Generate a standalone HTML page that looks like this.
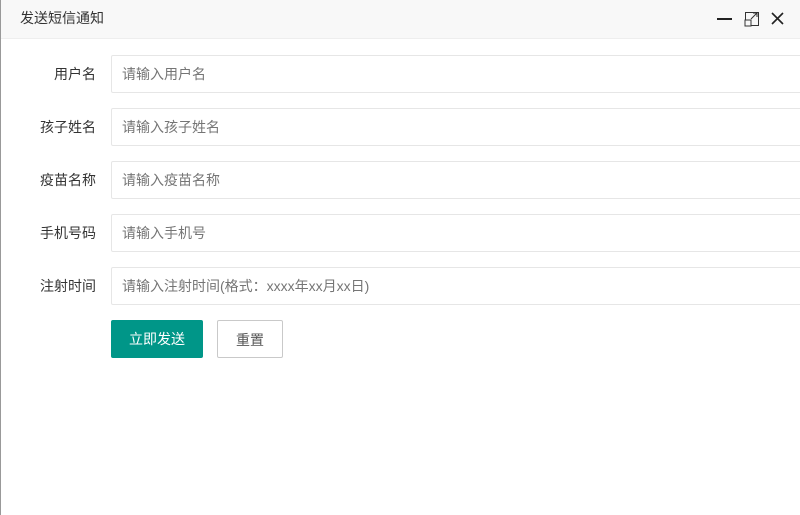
<!DOCTYPE html>
<html><head><meta charset="utf-8"><style>
body{margin:0;width:800px;height:515px;overflow:hidden;background:#fff;font-family:"Liberation Sans","Noto Sans CJK SC",sans-serif;position:relative}
.lb{position:absolute;left:0;top:0;width:1px;height:515px;background:#999}
.hd{position:absolute;left:1px;top:0;right:0;height:38px;background:#f8f8f8;border-bottom:1px solid #eee;color:#333;font-size:14px;line-height:36px;padding-left:19px}
.row{position:absolute;left:0;width:800px;height:38px}
.row label{position:absolute;right:704px;top:0;line-height:38px;font-size:14px;color:#333;white-space:nowrap}
.row .in{position:absolute;left:111px;top:0;width:700px;height:36px;border:1px solid #e6e6e6;border-radius:2px;line-height:36px;padding-left:10px;font-size:14px;color:#757575;box-sizing:content-box}
.btn{position:absolute;top:320px;height:38px;line-height:38px;font-size:14px;text-align:center;border-radius:2px;box-sizing:border-box}
</style></head><body>
<div class="lb"></div>
<div class="hd">发送短信通知
<svg style="position:absolute;left:716px;top:11px" width="70" height="16" viewBox="0 0 70 16">
<rect x="0" y="7" width="15" height="2" fill="#222"/>
<rect x="28.5" y="1.5" width="13" height="13" fill="none" stroke="#333" stroke-width="1"/>
<rect x="28" y="9" width="6" height="6" fill="#f8f8f8" stroke="#333" stroke-width="1"/>
<path d="M34 8 L40 2 M36 2 H40 V6" stroke="#333" fill="none"/>
<path d="M55 2 L66 13 M66 2 L55 13" stroke="#222" stroke-width="1.6"/>
</svg></div>
<div class="row" style="top:55px"><label>用户名</label><div class="in">请输入用户名</div></div>
<div class="row" style="top:108px"><label>孩子姓名</label><div class="in">请输入孩子姓名</div></div>
<div class="row" style="top:161px"><label>疫苗名称</label><div class="in">请输入疫苗名称</div></div>
<div class="row" style="top:214px"><label>手机号码</label><div class="in">请输入手机号</div></div>
<div class="row" style="top:267px"><label>注射时间</label><div class="in">请输入注射时间(格式：xxxx年xx月xx日)</div></div>
<div class="btn" style="left:111px;width:92px;background:#009688;color:#fff">立即发送</div>
<div class="btn" style="left:217px;width:66px;border:1px solid #c9c9c9;color:#555">重置</div>
</body></html>
